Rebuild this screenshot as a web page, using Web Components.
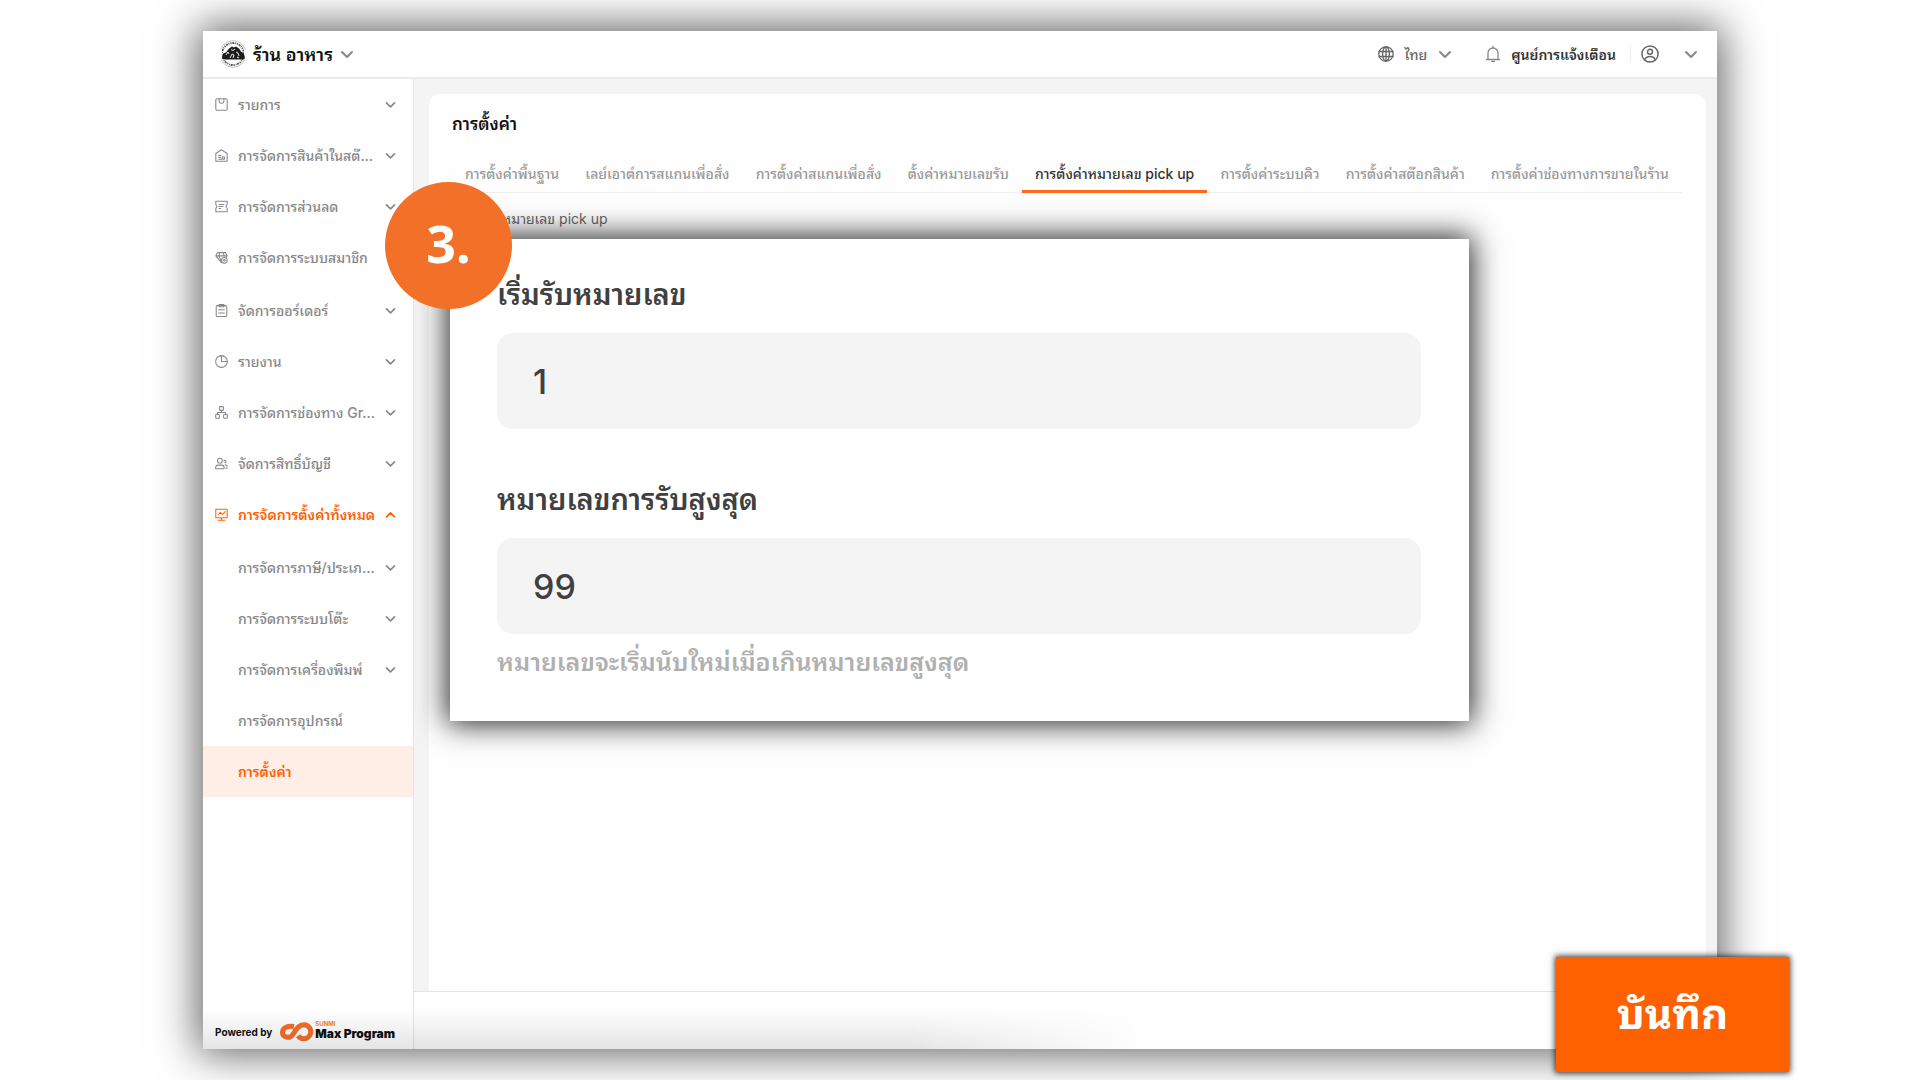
<!DOCTYPE html>
<html lang="th">
<head>
<meta charset="utf-8">
<title>การตั้งค่า</title>
<style>
  html, body { height: 100%; margin: 0; }
  body {
    background: #fff;
    font-family: Inter, "Noto Sans Thai Looped", Loma, Waree, Garuda, "Noto Sans Thai", "Noto Sans", sans-serif;
    color: #111;
    overflow: hidden;
  }
</style>
</head>
<body>
<settings-page></settings-page>

<script>
const icons = {
  chevron: '<path d="M3 6l5 5 5-5" stroke-width="2"/>',
  up: '<path d="M3 11l5-5 5 5" stroke-width="2"/>',
  box: '<rect x="1" y="1" width="14" height="14" rx="1.5"/><path d="M5 1v2.5a3 3 0 0 0 6 0V1"/>',
  store: '<path d="M1 15V5.5L8 1l7 4.5V15z"/><path d="M4.500 8h3M4.500 10.500h2.500M4.500 12.500h7M9 9.500h2.500v3H9z"/>',
  coupon: '<path d="M1 1.500h14v4l-1.500 2.500 1.500 2.500v4H1v-4L2.500 8 1 5.500z"/><path d="M5 5.500h6M5 8h5M5 10.500h2"/>',
  member: '<path d="M8 14.500L1 6l2-4h10l2 4-1.500 2M1 6h14M5.500 2L5 6l3 8M10.500 2L11 6"/><circle cx="11.500" cy="11.500" r="3.500"/><circle cx="11.500" cy="11.500" r="1"/>',
  order: '<rect x="1.500" y="2" width="13" height="13.500" rx="1.500"/><path d="M5 .7h6v2.800H5zM4.500 7h7M4.500 11h7"/>',
  report: '<circle cx="8" cy="8" r="7.200"/><path d="M8 1v7h7"/>',
  channel: '<rect x="5.700" y=".8" width="4.600" height="4.600" rx=".8"/><rect x=".8" y="10.500" width="4.600" height="4.600" rx=".8"/><rect x="10.600" y="10.500" width="4.600" height="4.600" rx=".8"/><path d="M8 5.400V8M3 10.500V8h10v2.500"/>',
  users: '<circle cx="6" cy="4.500" r="3"/><path d="M.8 14.500v-2a3 3 0 0 1 3-2.500h4.400a3 3 0 0 1 3 2.500v2zM11 4.500h1.500M12 4a1.500 1.500 0 0 1 0 3M12.500 9.500l2.500 1.500M13.500 13.500h2"/>',
  monitor: '<path d="M1 1.500h14v10.500H1zM8 12v2.800M4 15h8M4 8l2.500-2.500L9 8l3.500-3.500"/>',
  globe: '<circle cx="8" cy="8" r="7.200"/><ellipse cx="8" cy="8" rx="3.400" ry="7.200"/><path d="M1 5.500h14M1 10.500h14M8 1v14"/>',
  bell: '<path d="M1.500 13.500h13M3 13.500V7a5 5 0 0 1 10 0v6.500M8 2V.5M6.500 15.300h3"/>',
  user: '<circle cx="8" cy="8" r="7.200"/><circle cx="8" cy="6" r="2.200"/><path d="M3.500 13a4.600 3.500 0 0 1 9 0"/>'
};

// <ui-icon name="bell">, sized with --size
class UiIcon extends HTMLElement {
  constructor() {
    super();
    this.attachShadow({mode: 'open'});
    this.shadowRoot.innerHTML = `
      <style>
        :host { display: block; flex: none; width: var(--size, 13px); height: var(--size, 13px); }
        svg { display: block; width: 100%; height: 100%; overflow: visible; }
      </style>
      <svg viewBox="0 0 16 16" fill="none" stroke="currentColor" stroke-width="1.300" stroke-linejoin="round" stroke-linecap="round" aria-hidden="true">
        ${icons[this.getAttribute('name')] || ''}
      </svg>
    `;
  }
}
customElements.define('ui-icon', UiIcon);

const topBarTemplate = document.createElement('template');
topBarTemplate.innerHTML = `
  <style>
    :host {
      display: flex;
      justify-content: space-between;
      align-items: center;
      height: 46px;
      padding: 0 18px 0 16px;
      border-bottom: 2px solid #ebebeb;
      background: #fff;
    }
    div { display: flex; align-items: center; }
    button {
      display: flex;
      align-items: center;
      gap: 10px;
      padding: 0;
      border: 0;
      background: none;
      color: #666;
      font: inherit;
      font-size: 14px;
      font-weight: 500;
      white-space: nowrap;
      cursor: pointer;
    }
    .shop { gap: 6px; color: #111; font-size: 18px; font-weight: 600; }
    .logo { width: 28px; height: 28px; }
    .chevron { color: #888; --size: 16px; }
    .lang { margin-right: 32px; --size: 16px; }
    .notice { color: #333; font-weight: 600; --size: 16px; }
    .notice ui-icon { color: #888; }
    .user { gap: 24px; margin-left: 14px; padding-left: 10px; border-left: 1px solid #eee; --size: 18px; }
    span { padding-bottom: 2px; }
  </style>
  <button class="shop">
    <svg class="logo" viewBox="0 0 28 28" aria-hidden="true">
      <circle cx="14" cy="14" r="13.300" fill="#fff" stroke="#aaa" stroke-width=".7"/>
      <circle cx="14" cy="14" r="11" fill="none" stroke="#555" stroke-width="1.800" stroke-dasharray="1.200 .8 2 .7 .8 .9" pathLength="66" stroke-dashoffset="-2" />
      <path d="M0 9.500h3v10H0zM25 9.500h3v10h-3z" fill="#fff"/>
      <path d="M3 18.500l1-5 3-1 3-4 3-2 2 1 2-1 3 2 2 3 3 2 1 5-3 1H6z" fill="#1c1c1c"/>
      <path d="M7 15l2-3 1 2M12 9.500l2 1 2-1.500M11 18l2-4 2 1-1 3M17 12l2 1 1 3M18 17l2 1" fill="none" stroke="#fff" stroke-width=".9"/>
    </svg>
    <span>ร้าน อาหาร</span>
    <ui-icon class="chevron" name="chevron"></ui-icon>
  </button>
  <div>
    <button class="lang"><ui-icon name="globe"></ui-icon><span>ไทย</span><ui-icon class="chevron" name="chevron"></ui-icon></button>
    <button class="notice"><ui-icon name="bell"></ui-icon><span>ศูนย์การแจ้งเตือน</span></button>
    <button class="user" aria-label="บัญชี"><ui-icon name="user"></ui-icon><ui-icon class="chevron" name="chevron"></ui-icon></button>
  </div>
`;

class TopBar extends HTMLElement {
  constructor() {
    super();
    this.attachShadow({mode: 'open'});
    this.shadowRoot.appendChild(topBarTemplate.content.cloneNode(true));
  }
}
customElements.define('top-bar', TopBar);

class NavItem extends HTMLElement {
  constructor() {
    super();
    this.attachShadow({mode: 'open'});
    const icon = this.getAttribute('icon');
    const arrow = this.getAttribute('arrow');
    this.shadowRoot.innerHTML = `
      <style>
        :host { display: block; color: #888; font-weight: 500; }
        :host([active]) { color: #ff6000; font-weight: 600; }
        :host([selected]) { color: #ff6000; background: #ffeee5; font-weight: 600; }
        a {
          display: flex;
          align-items: center;
          height: 51px;
          padding: 0 16px 0 12px;
          color: inherit;
          font-size: 14px;
          text-decoration: none;
          white-space: nowrap;
        }
        .mark { width: 13px; margin-right: 10px; }
        .label { flex: 1; padding-bottom: 3px; }
      </style>
      <a href="#">
        <span class="mark">${icon ? `<ui-icon name="${icon}"></ui-icon>` : ''}</span>
        <span class="label"><slot></slot></span>
        ${arrow ? `<ui-icon name="${arrow}"></ui-icon>` : ''}
      </a>
    `;
  }
}
customElements.define('nav-item', NavItem);

const sideNavTemplate = document.createElement('template');
sideNavTemplate.innerHTML = `
  <style>
    :host {
      display: flex;
      flex-direction: column;
      justify-content: space-between;
      width: 210px;
      border-right: 1px solid #e4e4e4;
      background: #fff;
    }
    nav { display: flex; flex-direction: column; gap: 2px; }
    footer {
      display: flex;
      align-items: center;
      gap: 8px;
      height: 34px;
      padding-left: 12px;
      font-size: 10px;
      font-weight: 700;
      white-space: nowrap;
    }
    svg { width: 34px; height: 20px; flex: none; }
    .brand { display: flex; flex-direction: column; margin-left: -7px; padding-bottom: 4px; font-size: 12px; font-weight: 900; line-height: 14px; }
    small { color: #f37029; font-size: 6px; line-height: 7px; font-weight: 600; }
  </style>
  <nav>
    <div>
      <nav-item icon="box" arrow="chevron">รายการ</nav-item>
      <nav-item icon="store" arrow="chevron">การจัดการสินค้าในสต๊...</nav-item>
      <nav-item icon="coupon" arrow="chevron">การจัดการส่วนลด</nav-item>
      <nav-item icon="member">การจัดการระบบสมาชิก</nav-item>
    </div>
    <div>
      <nav-item icon="order" arrow="chevron">จัดการออร์เดอร์</nav-item>
      <nav-item icon="report" arrow="chevron">รายงาน</nav-item>
      <nav-item icon="channel" arrow="chevron">การจัดการช่องทาง Gr...</nav-item>
      <nav-item icon="users" arrow="chevron">จัดการสิทธิ์บัญชี</nav-item>
      <nav-item icon="monitor" arrow="up" active>การจัดการตั้งค่าทั้งหมด</nav-item>
    </div>
    <div>
      <nav-item arrow="chevron">การจัดการภาษี/ประเภ...</nav-item>
      <nav-item arrow="chevron">การจัดการระบบโต๊ะ</nav-item>
      <nav-item arrow="chevron">การจัดการเครื่องพิมพ์</nav-item>
      <nav-item>การจัดการอุปกรณ์</nav-item>
      <nav-item selected>การตั้งค่า</nav-item>
    </div>
  </nav>
  <footer>
    <span>Powered by</span>
    <svg viewBox="0 0 34 20" fill="none" stroke="#f37029" aria-hidden="true">
      <path d="M14 4.500C8 3.500 2.500 5.500 2.500 10.500c0 5 7 6.500 10 2.500C15.500 9 17.500 2.800 24 2.800a7 7 0 1 1-6 11" stroke-width="5"/>
    </svg>
    <span class="brand"><small>SUNMI</small>Max Program</span>
  </footer>
`;

class SideNav extends HTMLElement {
  constructor() {
    super();
    this.attachShadow({mode: 'open'});
    this.shadowRoot.appendChild(sideNavTemplate.content.cloneNode(true));
  }
}
customElements.define('side-nav', SideNav);

const tabTemplate = document.createElement('template');
tabTemplate.innerHTML = `
  <style>
    :host { display: block; color: #999; }
    :host([active]) { color: #333; }
    button {
      height: 40px;
      padding: 2px 13px 0;
      border: 0;
      border-bottom: 3px solid transparent;
      background: none;
      color: inherit;
      font: inherit;
      font-size: 14px;
      font-weight: 500;
      white-space: nowrap;
      cursor: pointer;
    }
    :host([active]) button { border-color: #ff6a1a; }
  </style>
  <button role="tab"><slot></slot></button>
`;

class TabItem extends HTMLElement {
  constructor() {
    super();
    this.attachShadow({mode: 'open'});
    this.shadowRoot.appendChild(tabTemplate.content.cloneNode(true));
    this.shadowRoot.querySelector('button').setAttribute('aria-selected', this.hasAttribute('active'));
  }
}
customElements.define('tab-item', TabItem);

const settingsTemplate = document.createElement('template');
settingsTemplate.innerHTML = `
  <style>
    :host { display: flex; flex-direction: column; min-width: 0; background: #f4f4f4; }
    .card {
      flex: 1;
      margin: 15px 11px 0 15px;
      padding: 0 24px 0 23px;
      border-radius: 10px 10px 0 0;
      background: #fefefe;
    }
    h1 { margin: 0; padding: 16px 0 15px; font-size: 17px; line-height: 28px; font-weight: 600; }
    .tabs { display: flex; justify-content: space-between; box-shadow: inset 0 -1px #efefef; }
    p { margin: 16px 0 0; padding-left: 50px; color: #666; font-size: 14px; line-height: 20px; }
    .actions { height: 57px; border-top: 1px solid #e4e4e4; background: #fefefe; }
  </style>
  <section class="card">
    <h1>การตั้งค่า</h1>
    <div class="tabs" role="tablist">
      <tab-item>การตั้งค่าพื้นฐาน</tab-item>
      <tab-item>เลย์เอาต์การสแกนเพื่อสั่ง</tab-item>
      <tab-item>การตั้งค่าสแกนเพื่อสั่ง</tab-item>
      <tab-item>ตั้งค่าหมายเลขรับ</tab-item>
      <tab-item active>การตั้งค่าหมายเลข pick up</tab-item>
      <tab-item>การตั้งค่าระบบคิว</tab-item>
      <tab-item>การตั้งค่าสต๊อกสินค้า</tab-item>
      <tab-item>การตั้งค่าช่องทางการขายในร้าน</tab-item>
    </div>
    <p>หมายเลข pick up</p>
  </section>
  <div class="actions"></div>
`;

class SettingsPanel extends HTMLElement {
  constructor() {
    super();
    this.attachShadow({mode: 'open'});
    this.shadowRoot.appendChild(settingsTemplate.content.cloneNode(true));
  }
}
customElements.define('settings-panel', SettingsPanel);

class NumberField extends HTMLElement {
  constructor() {
    super();
    this.attachShadow({mode: 'open'});
    this.shadowRoot.innerHTML = `
      <style>
        :host { display: block; color: #404040; }
        label { display: block; margin-bottom: 18px; font-size: 29px; line-height: 40px; font-weight: 600; }
        input {
          display: block;
          box-sizing: border-box;
          width: 100%;
          height: 96px;
          padding: 0 36px;
          border: 0;
          border-radius: 16px;
          background: #f4f4f4;
          color: inherit;
          font: inherit;
          font-size: 34px;
          font-weight: 500;
        }
        ::slotted(*) { display: block; margin-top: 8px; color: #b0b0b0; font-size: 25px; line-height: 40px; font-weight: 600; }
      </style>
      <label for="value">${this.getAttribute('label')}</label>
      <input id="value" type="text" inputmode="numeric" value="${this.getAttribute('value')}">
      <slot></slot>
    `;
  }
}
customElements.define('number-field', NumberField);

const pageTemplate = document.createElement('template');
pageTemplate.innerHTML = `
  <style>
    :host { display: block; position: relative; height: 100%; }
    .area { box-sizing: border-box; height: 100%; padding: 31px 203px; }
    .window {
      position: relative;
      display: flex;
      flex-direction: column;
      height: 100%;
      box-shadow: 0 0 40px 5px rgba(0, 0, 0, .62);
    }
    /* soft shade along the lower edge */
    .window::after {
      content: "";
      position: absolute;
      left: 0;
      bottom: 0;
      width: 62%;
      height: 40px;
      background: linear-gradient(transparent, rgba(0, 0, 0, .1));
      mask-image: linear-gradient(to right, #000 75%, transparent);
      pointer-events: none;
    }
    .body { flex: 1; display: flex; min-height: 0; }
    settings-panel { flex: 1; }
    .popup {
      position: absolute;
      z-index: 1;
      top: 208px;
      left: 247px;
      right: 248px;
      display: flex;
      flex-direction: column;
      gap: 51px;
      padding: 36px 48px 39px 47px;
      background: #fff;
      box-shadow: 0 0 28px 3px rgba(0, 0, 0, .85);
    }
    .step {
      position: absolute;
      z-index: 2;
      top: 151px;
      left: 182px;
      display: grid;
      place-items: center;
      box-sizing: border-box;
      width: 127px;
      height: 127px;
      padding-bottom: 6px;
      border-radius: 50%;
      background: #f37029;
      color: #fff;
      font: 700 52px/1 "Noto Sans", sans-serif;
    }
    .save {
      position: absolute;
      z-index: 3;
      right: 131px;
      bottom: 8px;
      width: 233px;
      height: 115px;
      padding: 0 0 10px;
      border: 0;
      background: #ff6000;
      color: #fff;
      font: inherit;
      font-size: 42px;
      font-weight: 700;
      box-shadow: 0 0 6px 1px rgba(0, 0, 0, .8);
      cursor: pointer;
    }
  </style>
  <div class="area">
    <main class="window">
      <top-bar></top-bar>
      <div class="body">
        <side-nav></side-nav>
        <settings-panel></settings-panel>
      </div>
      <div class="popup">
        <number-field label="เริ่มรับหมายเลข" value="1"></number-field>
        <number-field label="หมายเลขการรับสูงสุด" value="99"><span>หมายเลขจะเริ่มนับใหม่เมื่อเกินหมายเลขสูงสุด</span></number-field>
      </div>
      <div class="step">3.</div>
    </main>
  </div>
  <button class="save">บันทึก</button>
`;

class SettingsPage extends HTMLElement {
  constructor() {
    super();
    this.attachShadow({mode: 'open'});
    this.shadowRoot.appendChild(pageTemplate.content.cloneNode(true));
  }
}
customElements.define('settings-page', SettingsPage);
</script>
</body>
</html>
